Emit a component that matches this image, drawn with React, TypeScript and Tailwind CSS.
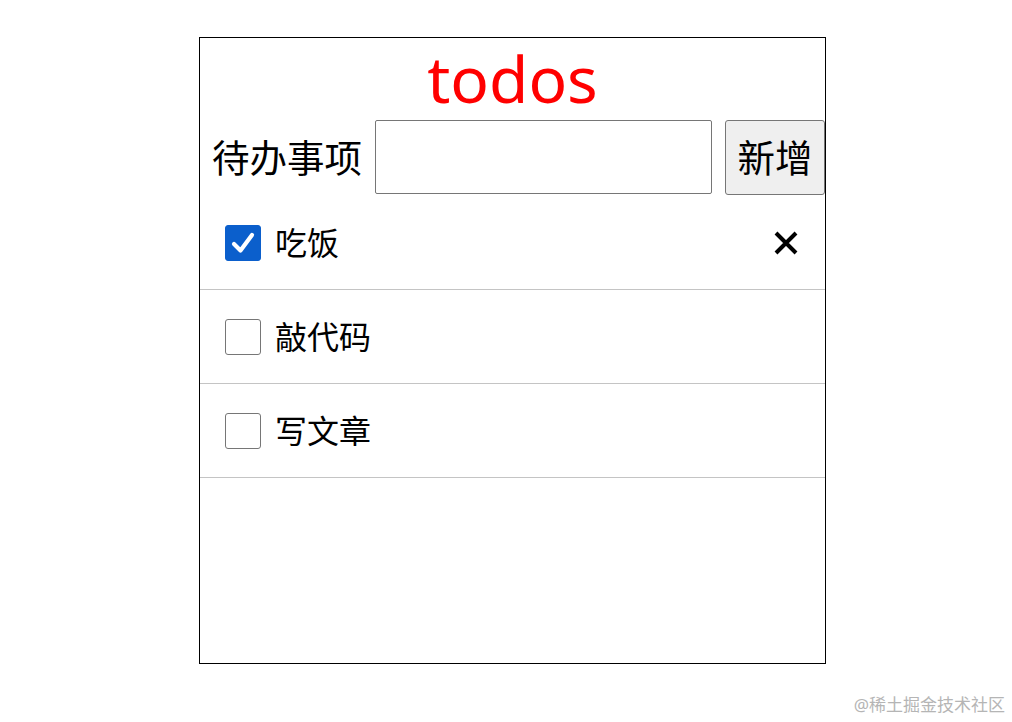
import React, { useState } from "react";

const font = { fontFamily: '"Noto Sans", "Noto Sans CJK SC", sans-serif' };

const initial = [
  { id: 1, text: "吃饭", done: true },
  { id: 2, text: "敲代码", done: false },
  { id: 3, text: "写文章", done: false },
];

const App = () => {
  const [todos, setTodos] = useState(initial);

  const toggle = (id: number) =>
    setTodos(todos.map((t) => (t.id === id ? { ...t, done: !t.done } : t)));
  const remove = (id: number) => setTodos(todos.filter((t) => t.id !== id));

  return (
    <div className="relative w-full h-[722px] bg-white text-black" style={font}>
      <div className="pt-[37px] pl-[199px]">
        <div className="w-[627px] h-[627px] border border-black">
          <h1 className="text-center text-[64px] leading-[82px] text-[#ff0000]">todos</h1>
          <div className="flex items-start h-[76px] pl-[12px] whitespace-nowrap">
            <span className="w-[163px] h-[75px] flex items-center shrink-0 text-[37.5px] leading-none">待办事项</span>
            <input className="w-[337px] h-[74px] border border-[#767676] rounded-[2px] outline-none px-2 text-[30px]" />
            <button className="ml-[13px] w-[100px] h-[75px] shrink-0 bg-[#efefef] border border-[#767676] rounded-[3px] text-[37.5px] leading-none">
              新增
            </button>
          </div>
          <ul>
            {todos.map((t) => (
              <li
                key={t.id}
                className="flex items-center h-[94px] border-b border-[#c4c4c4] pl-[25px] pr-[26px]"
              >
                <button
                  onClick={() => toggle(t.id)}
                  className={`w-9 h-9 rounded-[3px] flex items-center justify-center ${
                    t.done ? "bg-[#0b5fcc] border border-[#0b5fcc]" : "bg-white border border-[#767676]"
                  }`}
                >
                  {t.done && (
                    <svg width="26" height="26" viewBox="0 0 26 26">
                      <path d="M4 14 L10.5 20.5 L22 5" fill="none" stroke="white" strokeWidth="4.2" strokeLinecap="round" strokeLinejoin="round" />
                    </svg>
                  )}
                </button>
                <span className="ml-[14px] text-[32px] leading-none flex-1">{t.text}</span>
                {t.done && (
                  <button onClick={() => remove(t.id)} className="w-[26px] h-[26px]">
                    <svg width="26" height="26" viewBox="0 0 26 26">
                      <path d="M3 3 L23 23 M23 3 L3 23" stroke="black" strokeWidth="4" />
                    </svg>
                  </button>
                )}
              </li>
            ))}
          </ul>
        </div>
      </div>
      <div className="absolute right-[7px] bottom-[5px] text-[17px] text-[#b5b5b5]">
        @稀土掘金技术社区
      </div>
    </div>
  );
};

export default App;
